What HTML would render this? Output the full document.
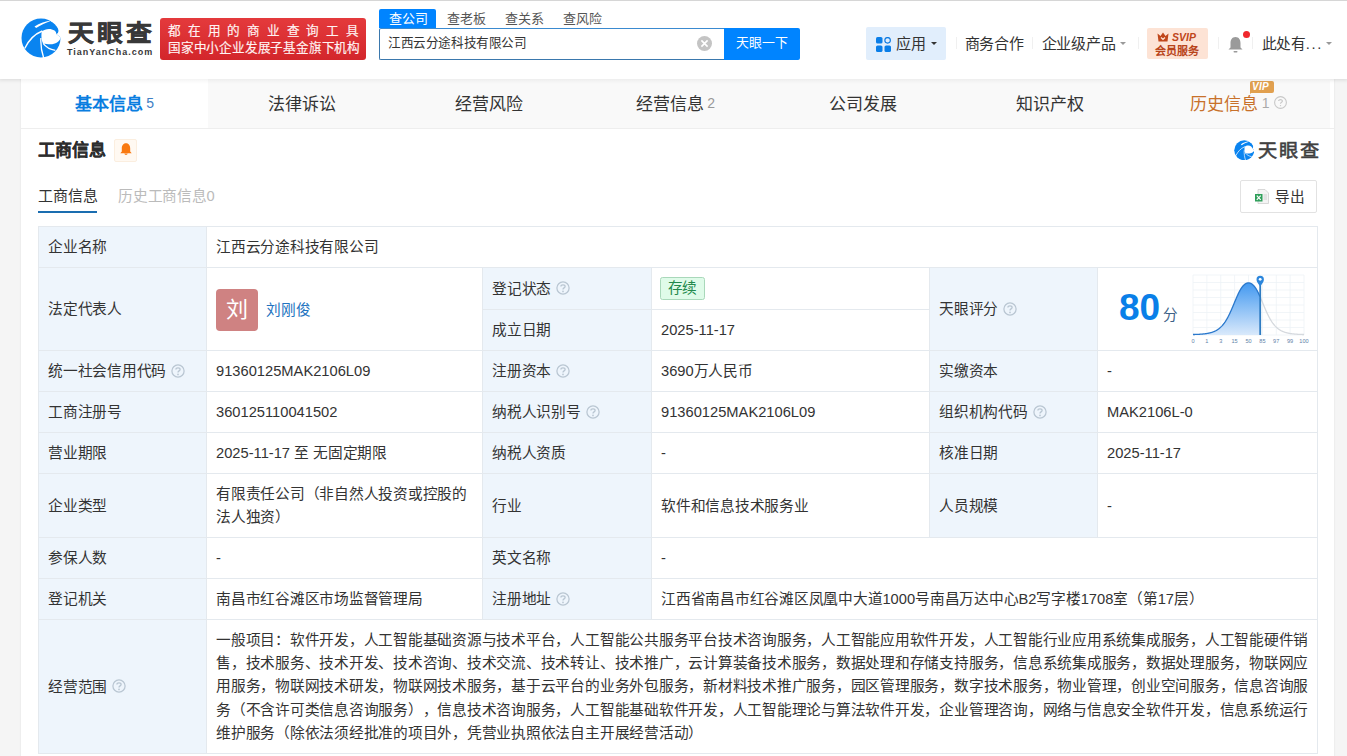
<!DOCTYPE html>
<html lang="zh-CN"><head><meta charset="utf-8"><title>天眼查</title>
<style>
html,body{margin:0;padding:0;}
svg{display:block}
*{text-spacing-trim:space-all}
body{width:1347px;height:756px;overflow:hidden;position:relative;background:#f5f5f5;font-family:"Liberation Sans", sans-serif;}
</style></head><body>
<div style="position:absolute;left:0px;top:0px;width:1347px;height:79px;background:#fff;box-shadow:0 1px 3px rgba(0,0,0,0.06);z-index:2"></div>
<div style="position:absolute;left:0px;top:0px;width:1347px;height:1px;background:#d6d6d6;z-index:3"></div>
<div style="position:absolute;left:0px;top:79px;width:1347px;height:5px;background:linear-gradient(180deg,rgba(0,0,0,0.045),rgba(0,0,0,0));z-index:7"></div>
<div style="position:absolute;left:21.2px;top:17.5px;width:40px;height:40px;z-index:4"><svg width="40" height="40" viewBox="1.5 1 40 40">
<circle cx="21.5" cy="21" r="19.5" fill="#0a84f0"/>
<path d="M15.0 9.4 C20 6.2 26 4.2 32.2 3.6 C26.5 5.9 21 8.3 16.6 11.0 Z" fill="#fff"/>
<path d="M31.6 4.6 C35.2 5.8 38.3 8.8 38.9 12.6 C39.2 15.1 38.3 16.9 36.8 16.9 L41.3 20.4 L43 20.4 L43 -1 L31 -1 Z" fill="#fff"/>
<path d="M22.3 14.3 C25.5 11.6 31.5 10.9 35 13.6 C36.2 14.6 36.8 15.8 36.8 16.9 L41.3 20.4 C40.2 24.6 35.8 27.2 31 27.2 C28.2 27.2 25.5 26.8 23.9 26.7 C22 24.5 21.5 18.5 22.3 14.3 Z" fill="#fff"/>
<path d="M5.2 31.5 C8.5 24.5 14 17.5 22.8 14" stroke="#fff" stroke-width="1.4" fill="none"/>
<path d="M21.4 21 C21 28 22 34.5 24.2 41" stroke="#fff" stroke-width="1.3" fill="none"/>
<path d="M23.6 26.4 C26.5 30.2 31 32.6 35.8 33.4" stroke="#fff" stroke-width="1.3" fill="none"/>
</svg></div>
<div style="position:absolute;left:68px;top:18px;font-size:23px;line-height:30px;color:#383838;white-space:nowrap;font-weight:bold;letter-spacing:3px;transform:scaleX(1.12);transform-origin:0 0;-webkit-text-stroke:0.5px #383838;z-index:4">天眼查</div>
<div style="position:absolute;left:67px;top:46px;font-size:9px;line-height:12px;color:#383838;white-space:nowrap;font-weight:bold;letter-spacing:1px;z-index:4">TianYanCha.com</div>
<div style="position:absolute;left:160px;top:18px;width:206px;height:42px;background:linear-gradient(180deg,#e43a3c,#d3262b);border-radius:3px;z-index:4"></div>
<div style="position:absolute;left:168px;top:22.5px;font-size:12.6px;line-height:16px;color:#fff3f3;white-space:nowrap;letter-spacing:6.75px;-webkit-text-stroke:0.15px #fff3f3;z-index:5">都在用的商业查询工具</div>
<div style="position:absolute;left:168px;top:39.5px;font-size:12.6px;line-height:16px;color:#fff3f3;white-space:nowrap;letter-spacing:-0.2px;-webkit-text-stroke:0.15px #fff3f3;z-index:5">国家中小企业发展子基金旗下机构</div>
<div style="position:absolute;left:379px;top:9px;width:57px;height:19px;background:#0084ff;border-radius:2px 2px 0 0;z-index:4"></div>
<div style="position:absolute;left:388.5px;top:9px;font-size:13px;line-height:19px;color:#fff;white-space:nowrap;z-index:5">查公司</div>
<div style="position:absolute;left:446.5px;top:9px;font-size:13px;line-height:19px;color:#555;white-space:nowrap;z-index:5">查老板</div>
<div style="position:absolute;left:504.6px;top:9px;font-size:13px;line-height:19px;color:#555;white-space:nowrap;z-index:5">查关系</div>
<div style="position:absolute;left:562.7px;top:9px;font-size:13px;line-height:19px;color:#555;white-space:nowrap;z-index:5">查风险</div>
<div style="position:absolute;left:379px;top:28px;width:345px;height:32px;box-sizing:border-box;border:1px solid #3a78ad;border-top-color:#3a8ad0;border-right:none;border-radius:2px 0 0 2px;background:#fff;z-index:4"></div>
<div style="position:absolute;left:388px;top:33px;font-size:12.6px;line-height:20px;color:#333;white-space:nowrap;z-index:5"><span><span style="letter-spacing:-0.4px">江西云分途科技有限公司</span></span></div>
<div style="position:absolute;left:697px;top:36px;width:15px;height:15px;z-index:5"><svg width="15" height="15" viewBox="0 0 15 15"><circle cx="7.5" cy="7.5" r="7.5" fill="#c4c4c4"/><path d="M4.4 4.4 L10.6 10.6 M10.6 4.4 L4.4 10.6" stroke="#fff" stroke-width="1.6"/></svg></div>
<div style="position:absolute;left:724px;top:28px;width:76px;height:32px;background:#0084ff;border-radius:0 2px 2px 0;z-index:4"></div>
<div style="position:absolute;left:736px;top:33px;font-size:12.9px;line-height:20px;color:#fff;white-space:nowrap;z-index:5"><span><span style="letter-spacing:-0.1px">天眼一下</span></span></div>
<div style="position:absolute;left:866px;top:27px;width:80px;height:33px;background:#e1eefc;border-radius:2px;z-index:4"></div>
<div style="position:absolute;left:876px;top:37px;width:15px;height:15px;z-index:5"><svg width="15" height="15" viewBox="0 0 15 15"><rect x="0" y="0" width="6.5" height="6.5" rx="1.6" fill="#0a7ee8"/><circle cx="11.6" cy="3.3" r="2.75" fill="none" stroke="#0a78e0" stroke-width="1.15"/><rect x="0" y="8.5" width="6.5" height="6.5" rx="1.6" fill="#0a7ee8"/><rect x="8.5" y="8.5" width="6.5" height="6.5" rx="1.6" fill="#0a7ee8"/></svg></div>
<div style="position:absolute;left:896px;top:34px;font-size:15px;line-height:20px;color:#333;white-space:nowrap;letter-spacing:-0.1px;z-index:5">应用</div>
<div style="position:absolute;left:930.5px;top:41.5px;width:0;height:0;border-left:3.5px solid transparent;border-right:3.5px solid transparent;border-top:3.5px solid #333;z-index:5"></div>
<div style="position:absolute;left:956px;top:37px;width:1px;height:12px;background:#f0f0f0;z-index:5"></div>
<div style="position:absolute;left:1032px;top:37px;width:1px;height:12px;background:#f0f0f0;z-index:5"></div>
<div style="position:absolute;left:1138px;top:37px;width:1px;height:12px;background:#f0f0f0;z-index:5"></div>
<div style="position:absolute;left:1218px;top:37px;width:1px;height:12px;background:#f0f0f0;z-index:5"></div>
<div style="position:absolute;left:1252px;top:37px;width:1px;height:12px;background:#f0f0f0;z-index:5"></div>
<div style="position:absolute;left:964.5px;top:34px;font-size:15px;line-height:20px;color:#333;white-space:nowrap;letter-spacing:-0.1px;z-index:5">商务合作</div>
<div style="position:absolute;left:1041.5px;top:34px;font-size:15px;line-height:20px;color:#333;white-space:nowrap;letter-spacing:-0.25px;z-index:5">企业级产品</div>
<div style="position:absolute;left:1120px;top:41.5px;width:0;height:0;border-left:3.5px solid transparent;border-right:3.5px solid transparent;border-top:3.5px solid #999;z-index:5"></div>
<div style="position:absolute;left:1147px;top:28px;width:61px;height:31px;background:#fde3d5;border-radius:2px;z-index:4"></div>
<div style="position:absolute;left:1157px;top:32px;width:12px;height:10px;z-index:5"><svg width="12" height="10" viewBox="0 0 12 10"><path d="M0.5 1.5 L3.5 4 L6 0.5 L8.5 4 L11.5 1.5 L10.5 9.5 L1.5 9.5 Z" fill="#c0461a"/><path d="M4 5.5 L6 7.5 L8 5.5" stroke="#fde3d5" stroke-width="1.2" fill="none"/></svg></div>
<div style="position:absolute;left:1172px;top:30px;font-size:10.5px;line-height:14px;color:#c0461a;white-space:nowrap;font-weight:bold;font-style:italic;z-index:5"><span>SVIP</span></div>
<div style="position:absolute;left:1155px;top:44px;font-size:11px;line-height:14px;color:#b8441a;white-space:nowrap;font-weight:bold;z-index:5">会员服务</div>
<div style="position:absolute;left:1227.5px;top:36px;width:15px;height:17px;z-index:5"><svg width="15" height="17" viewBox="0 0 15 17"><path d="M7.5 1 C4 1 2.5 4 2.5 7 L2.5 11.5 L0.5 13.5 L14.5 13.5 L12.5 11.5 L12.5 7 C12.5 4 11 1 7.5 1Z" fill="#9a9a9a"/><rect x="5.5" y="15" width="4" height="1.5" rx="0.7" fill="#9a9a9a"/></svg></div>
<div style="position:absolute;left:1243px;top:31.2px;width:7px;height:7px;background:#f0282d;border-radius:50%;z-index:6"></div>
<div style="position:absolute;left:1261.5px;top:34px;font-size:14.7px;line-height:20px;color:#333;white-space:nowrap;z-index:5"><span><span style="letter-spacing:-0.24px">此处有</span></span><span style="letter-spacing:1.6px"><span>...</span></span></div>
<div style="position:absolute;left:1325.5px;top:41.5px;width:0;height:0;border-left:3.5px solid transparent;border-right:3.5px solid transparent;border-top:3.5px solid #999;z-index:5"></div>
<div style="position:absolute;left:21px;top:79px;width:1313px;height:700px;background:#fff;box-shadow:0 0 2px rgba(0,0,0,0.09);z-index:1"></div>
<div style="position:absolute;left:21px;top:79px;width:187px;height:49px;background:#fff;z-index:2"></div>
<div style="position:absolute;left:21px;top:79px;width:187px;height:47px;display:flex;align-items:center;justify-content:center;font-size:17px;white-space:nowrap;z-index:3"><span style="font-weight:bold;color:#0a7ee0">基本信息</span><span style="font-size:14px;color:#3f7fc4;margin-left:3.5px">5</span></div>
<div style="position:absolute;left:208px;top:79px;width:187px;height:49px;background:#f9f9f9;z-index:2"></div>
<div style="position:absolute;left:208px;top:79px;width:187px;height:47px;display:flex;align-items:center;justify-content:center;font-size:17px;white-space:nowrap;z-index:3"><span style="color:#333">法律诉讼</span></div>
<div style="position:absolute;left:395px;top:79px;width:187px;height:49px;background:#f9f9f9;z-index:2"></div>
<div style="position:absolute;left:395px;top:79px;width:187px;height:47px;display:flex;align-items:center;justify-content:center;font-size:17px;white-space:nowrap;z-index:3"><span style="color:#333">经营风险</span></div>
<div style="position:absolute;left:582px;top:79px;width:187px;height:49px;background:#f9f9f9;z-index:2"></div>
<div style="position:absolute;left:582px;top:79px;width:187px;height:47px;display:flex;align-items:center;justify-content:center;font-size:17px;white-space:nowrap;z-index:3"><span style="color:#333">经营信息</span><span style="font-size:14px;color:#999;margin-left:3.5px">2</span></div>
<div style="position:absolute;left:769px;top:79px;width:187px;height:49px;background:#f9f9f9;z-index:2"></div>
<div style="position:absolute;left:769px;top:79px;width:187px;height:47px;display:flex;align-items:center;justify-content:center;font-size:17px;white-space:nowrap;z-index:3"><span style="color:#333">公司发展</span></div>
<div style="position:absolute;left:956px;top:79px;width:187px;height:49px;background:#f9f9f9;z-index:2"></div>
<div style="position:absolute;left:956px;top:79px;width:187px;height:47px;display:flex;align-items:center;justify-content:center;font-size:17px;white-space:nowrap;z-index:3"><span style="color:#333">知识产权</span></div>
<div style="position:absolute;left:1143px;top:79px;width:187px;height:49px;background:#f9f9f9;z-index:2"></div>
<div style="position:absolute;left:1143px;top:79px;width:187px;height:47px;display:flex;align-items:center;justify-content:center;font-size:17px;white-space:nowrap;z-index:3"><span style="color:#c8712a">历史信息</span><span style="font-size:14px;color:#aaa;margin-left:3.5px">1</span><span style="display:inline-block;width:13px;"></span></div>
<div style="position:absolute;left:21px;top:128px;width:1313px;height:1px;background:#eeeeee;z-index:3"></div>
<div style="position:absolute;left:1249.5px;top:81px;width:24.5px;height:11.5px;background:#e1a04f;border-radius:2px;z-index:4"></div>
<div style="position:absolute;left:1249.5px;top:91px;width:0;height:0;border-top:3px solid #e1a04f;border-right:4px solid transparent;z-index:4"></div>
<div style="position:absolute;left:1252px;top:80px;font-size:10px;line-height:13px;color:#fff;white-space:nowrap;font-weight:bold;font-style:italic;letter-spacing:0.3px;z-index:5">VIP</div>
<div style="position:absolute;left:1274px;top:95.5px;width:13px;height:13px;z-index:5"><svg width="13" height="13" viewBox="0 0 13 13"><circle cx="6.5" cy="6.5" r="5.9" fill="none" stroke="#c8c8c8" stroke-width="1.1"/><path d="M4.6 5 C4.6 3.2 8.4 3.2 8.4 5 C8.4 6.3 6.5 6.3 6.5 7.8" fill="none" stroke="#c8c8c8" stroke-width="1.1"/><circle cx="6.5" cy="9.6" r="0.7" fill="#c8c8c8"/></svg></div>
<div style="position:absolute;left:38px;top:136.5px;font-size:17px;line-height:28px;color:#2d2d2d;white-space:nowrap;font-weight:bold;-webkit-text-stroke:0.12px #2d2d2d;z-index:3">工商信息</div>
<div style="position:absolute;left:114px;top:139px;width:22.5px;height:23px;box-sizing:border-box;background:#fff9f2;border:1px solid #fbeedf;border-radius:2px;z-index:3"></div>
<div style="position:absolute;left:119.5px;top:142.5px;width:12px;height:13px;z-index:4"><svg width="12" height="13" viewBox="0 0 12 13"><path d="M6 0.3 C3 0.3 1.8 3 1.8 5.5 L1.8 8.6 L0.3 10.2 L11.7 10.2 L10.2 8.6 L10.2 5.5 C10.2 3 9 0.3 6 0.3Z" fill="#f97a12"/><path d="M4.3 10.5 L7.7 10.5 C7.5 12.4 4.5 12.4 4.3 10.5Z" fill="#f97a12"/></svg></div>
<div style="position:absolute;left:1233.5px;top:139.5px;width:21px;height:21px;z-index:4"><svg width="20.5" height="20.5" viewBox="1.5 1 40 40">
<circle cx="21.5" cy="21" r="19.5" fill="#0a84f0"/>
<path d="M15.0 9.4 C20 6.2 26 4.2 32.2 3.6 C26.5 5.9 21 8.3 16.6 11.0 Z" fill="#fff"/>
<path d="M31.6 4.6 C35.2 5.8 38.3 8.8 38.9 12.6 C39.2 15.1 38.3 16.9 36.8 16.9 L41.3 20.4 L43 20.4 L43 -1 L31 -1 Z" fill="#fff"/>
<path d="M22.3 14.3 C25.5 11.6 31.5 10.9 35 13.6 C36.2 14.6 36.8 15.8 36.8 16.9 L41.3 20.4 C40.2 24.6 35.8 27.2 31 27.2 C28.2 27.2 25.5 26.8 23.9 26.7 C22 24.5 21.5 18.5 22.3 14.3 Z" fill="#fff"/>
<path d="M5.2 31.5 C8.5 24.5 14 17.5 22.8 14" stroke="#fff" stroke-width="1.4" fill="none"/>
<path d="M21.4 21 C21 28 22 34.5 24.2 41" stroke="#fff" stroke-width="1.3" fill="none"/>
<path d="M23.6 26.4 C26.5 30.2 31 32.6 35.8 33.4" stroke="#fff" stroke-width="1.3" fill="none"/>
</svg></div>
<div style="position:absolute;left:1258px;top:136.5px;font-size:18px;line-height:28px;color:#404040;white-space:nowrap;font-weight:normal;-webkit-text-stroke:0.55px #404040;letter-spacing:1.5px;transform:scaleX(1.07);transform-origin:0 0;z-index:4">天眼查</div>
<div style="position:absolute;left:38px;top:184.5px;font-size:15px;line-height:21px;color:#333;white-space:nowrap;z-index:3">工商信息</div>
<div style="position:absolute;left:38px;top:211px;width:59px;height:2px;background:#1a6db0;z-index:3"></div>
<div style="position:absolute;left:118px;top:185.5px;font-size:14.7px;line-height:21px;color:#bbb;white-space:nowrap;z-index:3"><span><span style="letter-spacing:-0.24px">历史工商信息</span>0</span></div>
<div style="position:absolute;left:1240px;top:180px;width:77px;height:32.5px;box-sizing:border-box;border:1px solid #e2e2e2;border-radius:2px;background:#fff;z-index:3"></div>
<div style="position:absolute;left:1255px;top:189px;width:14px;height:15px;z-index:4"><svg width="14" height="15" viewBox="0 0 14 15"><path d="M3 0.5 L10 0.5 L13.5 4 L13.5 14.5 L3 14.5 Z" fill="#f4f4f4" stroke="#cfcfcf" stroke-width="0.8"/><path d="M8.5 6 L12 6 M8.5 8 L12 8 M8.5 10 L12 10" stroke="#c8c8c8" stroke-width="0.8"/><rect x="0" y="5" width="7.5" height="7.5" fill="#2f9f5a"/><path d="M1.8 6.6 L5.7 10.9 M5.7 6.6 L1.8 10.9" stroke="#fff" stroke-width="1.2"/></svg></div>
<div style="position:absolute;left:1275px;top:187px;font-size:14.7px;line-height:21px;color:#333;white-space:nowrap;z-index:4"><span><span style="letter-spacing:-0.24px">导出</span></span></div>
<div style="position:absolute;left:38px;top:226px;width:168px;height:527px;background:#eef5fc;z-index:2"></div>
<div style="position:absolute;left:482px;top:267px;width:169px;height:352px;background:#eef5fc;z-index:2"></div>
<div style="position:absolute;left:929px;top:267px;width:168px;height:270px;background:#eef5fc;z-index:2"></div>
<div style="position:absolute;left:38px;top:226px;width:1280px;height:1px;background:#e4e9ee;z-index:3"></div>
<div style="position:absolute;left:38px;top:267px;width:1280px;height:1px;background:#e4e9ee;z-index:3"></div>
<div style="position:absolute;left:38px;top:350px;width:1280px;height:1px;background:#e4e9ee;z-index:3"></div>
<div style="position:absolute;left:38px;top:391px;width:1280px;height:1px;background:#e4e9ee;z-index:3"></div>
<div style="position:absolute;left:38px;top:432px;width:1280px;height:1px;background:#e4e9ee;z-index:3"></div>
<div style="position:absolute;left:38px;top:473px;width:1280px;height:1px;background:#e4e9ee;z-index:3"></div>
<div style="position:absolute;left:38px;top:537px;width:1280px;height:1px;background:#e4e9ee;z-index:3"></div>
<div style="position:absolute;left:38px;top:578px;width:1280px;height:1px;background:#e4e9ee;z-index:3"></div>
<div style="position:absolute;left:38px;top:619px;width:1280px;height:1px;background:#e4e9ee;z-index:3"></div>
<div style="position:absolute;left:38px;top:753px;width:1280px;height:1px;background:#e4e9ee;z-index:3"></div>
<div style="position:absolute;left:482px;top:309px;width:447px;height:1px;background:#e4e9ee;z-index:3"></div>
<div style="position:absolute;left:38px;top:226px;width:1px;height:527px;background:#e4e9ee;z-index:3"></div>
<div style="position:absolute;left:1317px;top:226px;width:1px;height:528px;background:#e4e9ee;z-index:3"></div>
<div style="position:absolute;left:206px;top:226px;width:1px;height:527px;background:#e4e9ee;z-index:3"></div>
<div style="position:absolute;left:482px;top:267px;width:1px;height:352px;background:#e4e9ee;z-index:3"></div>
<div style="position:absolute;left:651px;top:267px;width:1px;height:352px;background:#e4e9ee;z-index:3"></div>
<div style="position:absolute;left:929px;top:267px;width:1px;height:270px;background:#e4e9ee;z-index:3"></div>
<div style="position:absolute;left:1097px;top:267px;width:1px;height:270px;background:#e4e9ee;z-index:3"></div>
<div style="position:absolute;left:48px;top:226px;width:148px;height:41px;display:flex;align-items:center;box-sizing:border-box;padding-top:2px;font-size:14.7px;line-height:21px;color:#333;z-index:4;"><span><span style="letter-spacing:-0.24px">企业名称</span></span></div>
<div style="position:absolute;left:216px;top:226px;width:1091px;height:41px;display:flex;align-items:center;box-sizing:border-box;padding-top:2px;font-size:14.7px;line-height:21px;color:#333;z-index:4;"><span><span style="letter-spacing:-0.24px">江西云分途科技有限公司</span></span></div>
<div style="position:absolute;left:48px;top:267px;width:148px;height:83px;display:flex;align-items:center;box-sizing:border-box;padding-top:2px;font-size:14.7px;line-height:21px;color:#333;z-index:4;"><span><span style="letter-spacing:-0.24px">法定代表人</span></span></div>
<div style="position:absolute;left:216px;top:267px;width:256px;height:83px;display:flex;align-items:center;box-sizing:border-box;padding-top:2px;font-size:14.7px;line-height:21px;color:#333;z-index:4;"><div style="width:42px;height:42px;border-radius:4px;background:#cf8282;color:#fff;font-size:22px;line-height:42px;text-align:center;flex:none"><span><span style="letter-spacing:-0.24px">刘</span></span></div><span style="color:#2273c0;margin-left:8px;position:relative;top:1px"><span><span style="letter-spacing:-0.24px">刘刚俊</span></span></span></div>
<div style="position:absolute;left:492px;top:267px;width:149px;height:42px;display:flex;align-items:center;box-sizing:border-box;padding-top:2px;font-size:14.7px;line-height:21px;color:#333;z-index:4;"><span><span style="letter-spacing:-0.24px">登记状态</span></span><svg style="margin-left:5.4px;flex:none;position:relative;top:-0.8px" width="14" height="14" viewBox="0 0 14 14"><circle cx="7" cy="7" r="6.1" fill="none" stroke="#b9c6d2" stroke-width="1.25"/><path d="M4.9 5.4 C4.9 3.3 9.1 3.3 9.1 5.4 C9.1 6.9 7 6.9 7 8.5" fill="none" stroke="#b9c6d2" stroke-width="1.3"/><circle cx="7" cy="10.4" r="0.85" fill="#b9c6d2"/></svg></div>
<div style="position:absolute;left:661px;top:267px;height:42px;display:flex;align-items:center;z-index:4"><span style="display:inline-block;box-sizing:border-box;height:23px;line-height:21px;padding:0 6.5px;margin-left:-1px;margin-top:0px;border:1px solid #a9d8ba;background:#dffbe9;color:#23894c;border-radius:2.5px;font-size:14.7px;letter-spacing:-0.24px">存续</span></div>
<div style="position:absolute;left:492px;top:309px;width:149px;height:41px;display:flex;align-items:center;box-sizing:border-box;padding-top:2px;font-size:14.7px;line-height:21px;color:#333;z-index:4;"><span><span style="letter-spacing:-0.24px">成立日期</span></span></div>
<div style="position:absolute;left:661px;top:309px;width:258px;height:41px;display:flex;align-items:center;box-sizing:border-box;padding-top:2px;font-size:14.7px;line-height:21px;color:#333;z-index:4;"><span>2025-11-17</span></div>
<div style="position:absolute;left:939px;top:267px;width:148px;height:83px;display:flex;align-items:center;box-sizing:border-box;padding-top:2px;font-size:14.7px;line-height:21px;color:#333;z-index:4;"><span><span style="letter-spacing:-0.24px">天眼评分</span></span><svg style="margin-left:5.4px;flex:none;position:relative;top:-0.8px" width="14" height="14" viewBox="0 0 14 14"><circle cx="7" cy="7" r="6.1" fill="none" stroke="#b9c6d2" stroke-width="1.25"/><path d="M4.9 5.4 C4.9 3.3 9.1 3.3 9.1 5.4 C9.1 6.9 7 6.9 7 8.5" fill="none" stroke="#b9c6d2" stroke-width="1.3"/><circle cx="7" cy="10.4" r="0.85" fill="#b9c6d2"/></svg></div>
<div style="position:absolute;left:1119px;top:285px;font-size:37px;line-height:46px;color:#0a7fe8;white-space:nowrap;font-weight:bold;z-index:4">80</div>
<div style="position:absolute;left:1162.5px;top:302.5px;font-size:14.7px;line-height:24px;color:#3e6288;white-space:nowrap;z-index:4"><span><span style="letter-spacing:-0.24px">分</span></span></div>
<div style="position:absolute;left:1193px;top:275px;width:111px;height:60px;z-index:4"><svg width="111" height="60" viewBox="0 0 111 60" style="overflow:visible"><defs><linearGradient id="g1" x1="0" y1="0" x2="0" y2="1"><stop offset="0" stop-color="#4399f0"/><stop offset="1" stop-color="#d9e9fb"/></linearGradient></defs>
<line x1="0.0" y1="0" x2="0.0" y2="60" stroke="#eef2f6" stroke-width="0.8"/><line x1="0" y1="0.0" x2="111" y2="0.0" stroke="#eef2f6" stroke-width="0.8"/><line x1="13.88" y1="0" x2="13.88" y2="60" stroke="#eef2f6" stroke-width="0.8"/><line x1="0" y1="7.5" x2="111" y2="7.5" stroke="#eef2f6" stroke-width="0.8"/><line x1="27.75" y1="0" x2="27.75" y2="60" stroke="#eef2f6" stroke-width="0.8"/><line x1="0" y1="15.0" x2="111" y2="15.0" stroke="#eef2f6" stroke-width="0.8"/><line x1="41.62" y1="0" x2="41.62" y2="60" stroke="#eef2f6" stroke-width="0.8"/><line x1="0" y1="22.5" x2="111" y2="22.5" stroke="#eef2f6" stroke-width="0.8"/><line x1="55.5" y1="0" x2="55.5" y2="60" stroke="#eef2f6" stroke-width="0.8"/><line x1="0" y1="30.0" x2="111" y2="30.0" stroke="#eef2f6" stroke-width="0.8"/><line x1="69.38" y1="0" x2="69.38" y2="60" stroke="#eef2f6" stroke-width="0.8"/><line x1="0" y1="37.5" x2="111" y2="37.5" stroke="#eef2f6" stroke-width="0.8"/><line x1="83.25" y1="0" x2="83.25" y2="60" stroke="#eef2f6" stroke-width="0.8"/><line x1="0" y1="45.0" x2="111" y2="45.0" stroke="#eef2f6" stroke-width="0.8"/><line x1="97.12" y1="0" x2="97.12" y2="60" stroke="#eef2f6" stroke-width="0.8"/><line x1="0" y1="52.5" x2="111" y2="52.5" stroke="#eef2f6" stroke-width="0.8"/><line x1="111.0" y1="0" x2="111.0" y2="60" stroke="#eef2f6" stroke-width="0.8"/><line x1="0" y1="60.0" x2="111" y2="60.0" stroke="#eef2f6" stroke-width="0.8"/>
<path d="M0.00 59.52 L0.25 59.52 L0.50 59.51 L0.75 59.50 L1.00 59.50 L1.25 59.49 L1.50 59.48 L1.75 59.48 L2.00 59.47 L2.25 59.46 L2.50 59.45 L2.75 59.44 L3.00 59.43 L3.25 59.42 L3.50 59.41 L3.75 59.40 L4.00 59.39 L4.25 59.38 L4.50 59.37 L4.75 59.36 L5.00 59.35 L5.25 59.34 L5.50 59.32 L5.75 59.31 L6.00 59.30 L6.25 59.28 L6.50 59.27 L6.75 59.25 L7.00 59.24 L7.25 59.22 L7.50 59.20 L7.75 59.19 L8.00 59.17 L8.25 59.15 L8.50 59.13 L8.75 59.11 L9.00 59.09 L9.25 59.07 L9.50 59.04 L9.75 59.02 L10.00 59.00 L10.25 58.97 L10.50 58.95 L10.75 58.92 L11.00 58.89 L11.25 58.87 L11.50 58.84 L11.75 58.81 L12.00 58.78 L12.25 58.74 L12.50 58.71 L12.75 58.68 L13.00 58.64 L13.25 58.60 L13.50 58.56 L13.75 58.53 L14.00 58.48 L14.25 58.44 L14.50 58.40 L14.75 58.35 L15.00 58.31 L15.25 58.26 L15.50 58.21 L15.75 58.16 L16.00 58.10 L16.25 58.05 L16.50 57.99 L16.75 57.93 L17.00 57.87 L17.25 57.81 L17.50 57.74 L17.75 57.67 L18.00 57.60 L18.25 57.53 L18.50 57.46 L18.75 57.38 L19.00 57.30 L19.25 57.22 L19.50 57.13 L19.75 57.05 L20.00 56.96 L20.25 56.86 L20.50 56.76 L20.75 56.66 L21.00 56.56 L21.25 56.46 L21.50 56.35 L21.75 56.23 L22.00 56.11 L22.25 55.99 L22.50 55.87 L22.75 55.74 L23.00 55.61 L23.25 55.47 L23.50 55.33 L23.75 55.18 L24.00 55.03 L24.25 54.88 L24.50 54.72 L24.75 54.55 L25.00 54.38 L25.25 54.21 L25.50 54.03 L25.75 53.84 L26.00 53.65 L26.25 53.45 L26.50 53.25 L26.75 53.04 L27.00 52.82 L27.25 52.60 L27.50 52.37 L27.75 52.14 L28.00 51.90 L28.25 51.65 L28.50 51.40 L28.75 51.13 L29.00 50.86 L29.25 50.59 L29.50 50.30 L29.75 50.01 L30.00 49.71 L30.25 49.40 L30.50 49.09 L30.75 48.77 L31.00 48.43 L31.25 48.10 L31.50 47.75 L31.75 47.39 L32.00 47.03 L32.25 46.65 L32.50 46.27 L32.75 45.88 L33.00 45.48 L33.25 45.07 L33.50 44.66 L33.75 44.23 L34.00 43.80 L34.25 43.35 L34.50 42.90 L34.75 42.44 L35.00 41.97 L35.25 41.50 L35.50 41.01 L35.75 40.52 L36.00 40.01 L36.25 39.50 L36.50 38.99 L36.75 38.46 L37.00 37.93 L37.25 37.39 L37.50 36.84 L37.75 36.29 L38.00 35.73 L38.25 35.17 L38.50 34.59 L38.75 34.02 L39.00 33.44 L39.25 32.85 L39.50 32.26 L39.75 31.67 L40.00 31.08 L40.25 30.48 L40.50 29.88 L40.75 29.28 L41.00 28.67 L41.25 28.07 L41.50 27.47 L41.75 26.86 L42.00 26.26 L42.25 25.66 L42.50 25.06 L42.75 24.47 L43.00 23.88 L43.25 23.29 L43.50 22.71 L43.75 22.14 L44.00 21.57 L44.25 21.00 L44.50 20.45 L44.75 19.90 L45.00 19.36 L45.25 18.83 L45.50 18.31 L45.75 17.80 L46.00 17.30 L46.25 16.81 L46.50 16.33 L46.75 15.86 L47.00 15.40 L47.25 14.96 L47.50 14.53 L47.75 14.11 L48.00 13.71 L48.25 13.32 L48.50 12.94 L48.75 12.58 L49.00 12.23 L49.25 11.89 L49.50 11.57 L49.75 11.26 L50.00 10.97 L50.25 10.69 L50.50 10.42 L50.75 10.17 L51.00 9.93 L51.25 9.71 L51.50 9.50 L51.75 9.30 L52.00 9.12 L52.25 8.95 L52.50 8.79 L52.75 8.65 L53.00 8.51 L53.25 8.40 L53.50 8.29 L53.75 8.20 L54.00 8.12 L54.25 8.05 L54.50 8.00 L54.75 7.95 L55.00 7.92 L55.25 7.91 L55.50 7.90 L55.75 7.91 L56.00 7.92 L56.25 7.95 L56.50 8.00 L56.75 8.05 L57.00 8.12 L57.25 8.20 L57.50 8.29 L57.75 8.40 L58.00 8.51 L58.25 8.65 L58.50 8.79 L58.75 8.95 L59.00 9.12 L59.25 9.30 L59.50 9.50 L59.75 9.71 L60.00 9.93 L60.25 10.17 L60.50 10.42 L60.75 10.69 L61.00 10.97 L61.25 11.26 L61.50 11.57 L61.75 11.89 L62.00 12.23 L62.25 12.58 L62.50 12.94 L62.75 13.32 L63.00 13.71 L63.25 14.11 L63.50 14.53 L63.75 14.96 L64.00 15.40 L64.25 15.86 L64.50 16.33 L64.75 16.81 L65.00 17.30 L65.25 17.80 L65.50 18.31 L65.75 18.83 L66.00 19.36 L66.25 19.90 L66.50 20.45 L66.75 21.00 L67.00 21.57 L67.2 22.02 L67.2 60 L0 60 Z" fill="url(#g1)"/>
<path d="M0.00 59.52 L0.25 59.52 L0.50 59.51 L0.75 59.50 L1.00 59.50 L1.25 59.49 L1.50 59.48 L1.75 59.48 L2.00 59.47 L2.25 59.46 L2.50 59.45 L2.75 59.44 L3.00 59.43 L3.25 59.42 L3.50 59.41 L3.75 59.40 L4.00 59.39 L4.25 59.38 L4.50 59.37 L4.75 59.36 L5.00 59.35 L5.25 59.34 L5.50 59.32 L5.75 59.31 L6.00 59.30 L6.25 59.28 L6.50 59.27 L6.75 59.25 L7.00 59.24 L7.25 59.22 L7.50 59.20 L7.75 59.19 L8.00 59.17 L8.25 59.15 L8.50 59.13 L8.75 59.11 L9.00 59.09 L9.25 59.07 L9.50 59.04 L9.75 59.02 L10.00 59.00 L10.25 58.97 L10.50 58.95 L10.75 58.92 L11.00 58.89 L11.25 58.87 L11.50 58.84 L11.75 58.81 L12.00 58.78 L12.25 58.74 L12.50 58.71 L12.75 58.68 L13.00 58.64 L13.25 58.60 L13.50 58.56 L13.75 58.53 L14.00 58.48 L14.25 58.44 L14.50 58.40 L14.75 58.35 L15.00 58.31 L15.25 58.26 L15.50 58.21 L15.75 58.16 L16.00 58.10 L16.25 58.05 L16.50 57.99 L16.75 57.93 L17.00 57.87 L17.25 57.81 L17.50 57.74 L17.75 57.67 L18.00 57.60 L18.25 57.53 L18.50 57.46 L18.75 57.38 L19.00 57.30 L19.25 57.22 L19.50 57.13 L19.75 57.05 L20.00 56.96 L20.25 56.86 L20.50 56.76 L20.75 56.66 L21.00 56.56 L21.25 56.46 L21.50 56.35 L21.75 56.23 L22.00 56.11 L22.25 55.99 L22.50 55.87 L22.75 55.74 L23.00 55.61 L23.25 55.47 L23.50 55.33 L23.75 55.18 L24.00 55.03 L24.25 54.88 L24.50 54.72 L24.75 54.55 L25.00 54.38 L25.25 54.21 L25.50 54.03 L25.75 53.84 L26.00 53.65 L26.25 53.45 L26.50 53.25 L26.75 53.04 L27.00 52.82 L27.25 52.60 L27.50 52.37 L27.75 52.14 L28.00 51.90 L28.25 51.65 L28.50 51.40 L28.75 51.13 L29.00 50.86 L29.25 50.59 L29.50 50.30 L29.75 50.01 L30.00 49.71 L30.25 49.40 L30.50 49.09 L30.75 48.77 L31.00 48.43 L31.25 48.10 L31.50 47.75 L31.75 47.39 L32.00 47.03 L32.25 46.65 L32.50 46.27 L32.75 45.88 L33.00 45.48 L33.25 45.07 L33.50 44.66 L33.75 44.23 L34.00 43.80 L34.25 43.35 L34.50 42.90 L34.75 42.44 L35.00 41.97 L35.25 41.50 L35.50 41.01 L35.75 40.52 L36.00 40.01 L36.25 39.50 L36.50 38.99 L36.75 38.46 L37.00 37.93 L37.25 37.39 L37.50 36.84 L37.75 36.29 L38.00 35.73 L38.25 35.17 L38.50 34.59 L38.75 34.02 L39.00 33.44 L39.25 32.85 L39.50 32.26 L39.75 31.67 L40.00 31.08 L40.25 30.48 L40.50 29.88 L40.75 29.28 L41.00 28.67 L41.25 28.07 L41.50 27.47 L41.75 26.86 L42.00 26.26 L42.25 25.66 L42.50 25.06 L42.75 24.47 L43.00 23.88 L43.25 23.29 L43.50 22.71 L43.75 22.14 L44.00 21.57 L44.25 21.00 L44.50 20.45 L44.75 19.90 L45.00 19.36 L45.25 18.83 L45.50 18.31 L45.75 17.80 L46.00 17.30 L46.25 16.81 L46.50 16.33 L46.75 15.86 L47.00 15.40 L47.25 14.96 L47.50 14.53 L47.75 14.11 L48.00 13.71 L48.25 13.32 L48.50 12.94 L48.75 12.58 L49.00 12.23 L49.25 11.89 L49.50 11.57 L49.75 11.26 L50.00 10.97 L50.25 10.69 L50.50 10.42 L50.75 10.17 L51.00 9.93 L51.25 9.71 L51.50 9.50 L51.75 9.30 L52.00 9.12 L52.25 8.95 L52.50 8.79 L52.75 8.65 L53.00 8.51 L53.25 8.40 L53.50 8.29 L53.75 8.20 L54.00 8.12 L54.25 8.05 L54.50 8.00 L54.75 7.95 L55.00 7.92 L55.25 7.91 L55.50 7.90 L55.75 7.91 L56.00 7.92 L56.25 7.95 L56.50 8.00 L56.75 8.05 L57.00 8.12 L57.25 8.20 L57.50 8.29 L57.75 8.40 L58.00 8.51 L58.25 8.65 L58.50 8.79 L58.75 8.95 L59.00 9.12 L59.25 9.30 L59.50 9.50 L59.75 9.71 L60.00 9.93 L60.25 10.17 L60.50 10.42 L60.75 10.69 L61.00 10.97 L61.25 11.26 L61.50 11.57 L61.75 11.89 L62.00 12.23 L62.25 12.58 L62.50 12.94 L62.75 13.32 L63.00 13.71 L63.25 14.11 L63.50 14.53 L63.75 14.96 L64.00 15.40 L64.25 15.86 L64.50 16.33 L64.75 16.81 L65.00 17.30 L65.25 17.80 L65.50 18.31 L65.75 18.83 L66.00 19.36 L66.25 19.90 L66.50 20.45 L66.75 21.00 L67.00 21.57" fill="none" stroke="#2a78cc" stroke-width="1.3"/>
<path d="M67.25 22.14 L67.50 22.71 L67.75 23.29 L68.00 23.88 L68.25 24.47 L68.50 25.06 L68.75 25.66 L69.00 26.26 L69.25 26.86 L69.50 27.47 L69.75 28.07 L70.00 28.67 L70.25 29.28 L70.50 29.88 L70.75 30.48 L71.00 31.08 L71.25 31.67 L71.50 32.26 L71.75 32.85 L72.00 33.44 L72.25 34.02 L72.50 34.59 L72.75 35.17 L73.00 35.73 L73.25 36.29 L73.50 36.84 L73.75 37.39 L74.00 37.93 L74.25 38.46 L74.50 38.99 L74.75 39.50 L75.00 40.01 L75.25 40.52 L75.50 41.01 L75.75 41.50 L76.00 41.97 L76.25 42.44 L76.50 42.90 L76.75 43.35 L77.00 43.80 L77.25 44.23 L77.50 44.66 L77.75 45.07 L78.00 45.48 L78.25 45.88 L78.50 46.27 L78.75 46.65 L79.00 47.03 L79.25 47.39 L79.50 47.75 L79.75 48.10 L80.00 48.43 L80.25 48.77 L80.50 49.09 L80.75 49.40 L81.00 49.71 L81.25 50.01 L81.50 50.30 L81.75 50.59 L82.00 50.86 L82.25 51.13 L82.50 51.40 L82.75 51.65 L83.00 51.90 L83.25 52.14 L83.50 52.37 L83.75 52.60 L84.00 52.82 L84.25 53.04 L84.50 53.25 L84.75 53.45 L85.00 53.65 L85.25 53.84 L85.50 54.03 L85.75 54.21 L86.00 54.38 L86.25 54.55 L86.50 54.72 L86.75 54.88 L87.00 55.03 L87.25 55.18 L87.50 55.33 L87.75 55.47 L88.00 55.61 L88.25 55.74 L88.50 55.87 L88.75 55.99 L89.00 56.11 L89.25 56.23 L89.50 56.35 L89.75 56.46 L90.00 56.56 L90.25 56.66 L90.50 56.76 L90.75 56.86 L91.00 56.96 L91.25 57.05 L91.50 57.13 L91.75 57.22 L92.00 57.30 L92.25 57.38 L92.50 57.46 L92.75 57.53 L93.00 57.60 L93.25 57.67 L93.50 57.74 L93.75 57.81 L94.00 57.87 L94.25 57.93 L94.50 57.99 L94.75 58.05 L95.00 58.10 L95.25 58.16 L95.50 58.21 L95.75 58.26 L96.00 58.31 L96.25 58.35 L96.50 58.40 L96.75 58.44 L97.00 58.48 L97.25 58.53 L97.50 58.56 L97.75 58.60 L98.00 58.64 L98.25 58.68 L98.50 58.71 L98.75 58.74 L99.00 58.78 L99.25 58.81 L99.50 58.84 L99.75 58.87 L100.00 58.89 L100.25 58.92 L100.50 58.95 L100.75 58.97 L101.00 59.00 L101.25 59.02 L101.50 59.04 L101.75 59.07 L102.00 59.09 L102.25 59.11 L102.50 59.13 L102.75 59.15 L103.00 59.17 L103.25 59.19 L103.50 59.20 L103.75 59.22 L104.00 59.24 L104.25 59.25 L104.50 59.27 L104.75 59.28 L105.00 59.30 L105.25 59.31 L105.50 59.32 L105.75 59.34 L106.00 59.35 L106.25 59.36 L106.50 59.37 L106.75 59.38 L107.00 59.39 L107.25 59.40 L107.50 59.41 L107.75 59.42 L108.00 59.43 L108.25 59.44 L108.50 59.45 L108.75 59.46 L109.00 59.47 L109.25 59.48 L109.50 59.48 L109.75 59.49 L110.00 59.50 L110.25 59.50 L110.50 59.51 L110.75 59.52 L111.00 59.52" fill="none" stroke="#d5d9de" stroke-width="1.3"/>
<line x1="67.2" y1="8" x2="67.2" y2="60" stroke="#2f7cc2" stroke-width="1.8"/>
<path d="M67.2 11.2 C65.2 8.7 63.5 7 63.5 4.5 A3.7 3.7 0 0 1 70.9 4.5 C70.9 7 69.2 8.7 67.2 11.2Z" fill="#2b86dc"/>
<circle cx="67.2" cy="4.3" r="1.4" fill="#fff"/>
</svg></div>
<div style="position:absolute;left:1183.0px;top:337.3px;width:20px;text-align:center;font-size:5.6px;line-height:8px;color:#5f82a8;z-index:4">0</div>
<div style="position:absolute;left:1196.9px;top:337.3px;width:20px;text-align:center;font-size:5.6px;line-height:8px;color:#5f82a8;z-index:4">1</div>
<div style="position:absolute;left:1210.8px;top:337.3px;width:20px;text-align:center;font-size:5.6px;line-height:8px;color:#5f82a8;z-index:4">3</div>
<div style="position:absolute;left:1224.6px;top:337.3px;width:20px;text-align:center;font-size:5.6px;line-height:8px;color:#5f82a8;z-index:4">15</div>
<div style="position:absolute;left:1238.5px;top:337.3px;width:20px;text-align:center;font-size:5.6px;line-height:8px;color:#5f82a8;z-index:4">50</div>
<div style="position:absolute;left:1252.4px;top:337.3px;width:20px;text-align:center;font-size:5.6px;line-height:8px;color:#5f82a8;z-index:4">85</div>
<div style="position:absolute;left:1266.2px;top:337.3px;width:20px;text-align:center;font-size:5.6px;line-height:8px;color:#5f82a8;z-index:4">97</div>
<div style="position:absolute;left:1280.1px;top:337.3px;width:20px;text-align:center;font-size:5.6px;line-height:8px;color:#5f82a8;z-index:4">99</div>
<div style="position:absolute;left:1294.0px;top:337.3px;width:20px;text-align:center;font-size:5.6px;line-height:8px;color:#5f82a8;z-index:4">100</div>
<div style="position:absolute;left:48px;top:350px;width:148px;height:41px;display:flex;align-items:center;box-sizing:border-box;padding-top:2px;font-size:14.7px;line-height:21px;color:#333;z-index:4;"><span><span style="letter-spacing:-0.24px">统一社会信用代码</span></span><svg style="margin-left:5.4px;flex:none;position:relative;top:-0.8px" width="14" height="14" viewBox="0 0 14 14"><circle cx="7" cy="7" r="6.1" fill="none" stroke="#b9c6d2" stroke-width="1.25"/><path d="M4.9 5.4 C4.9 3.3 9.1 3.3 9.1 5.4 C9.1 6.9 7 6.9 7 8.5" fill="none" stroke="#b9c6d2" stroke-width="1.3"/><circle cx="7" cy="10.4" r="0.85" fill="#b9c6d2"/></svg></div>
<div style="position:absolute;left:216px;top:350px;width:256px;height:41px;display:flex;align-items:center;box-sizing:border-box;padding-top:2px;font-size:14.7px;line-height:21px;color:#333;z-index:4;"><span>91360125MAK2106L09</span></div>
<div style="position:absolute;left:492px;top:350px;width:149px;height:41px;display:flex;align-items:center;box-sizing:border-box;padding-top:2px;font-size:14.7px;line-height:21px;color:#333;z-index:4;"><span><span style="letter-spacing:-0.24px">注册资本</span></span><svg style="margin-left:5.4px;flex:none;position:relative;top:-0.8px" width="14" height="14" viewBox="0 0 14 14"><circle cx="7" cy="7" r="6.1" fill="none" stroke="#b9c6d2" stroke-width="1.25"/><path d="M4.9 5.4 C4.9 3.3 9.1 3.3 9.1 5.4 C9.1 6.9 7 6.9 7 8.5" fill="none" stroke="#b9c6d2" stroke-width="1.3"/><circle cx="7" cy="10.4" r="0.85" fill="#b9c6d2"/></svg></div>
<div style="position:absolute;left:661px;top:350px;width:258px;height:41px;display:flex;align-items:center;box-sizing:border-box;padding-top:2px;font-size:14.7px;line-height:21px;color:#333;z-index:4;"><span>3690<span style="letter-spacing:-0.24px">万人民币</span></span></div>
<div style="position:absolute;left:939px;top:350px;width:148px;height:41px;display:flex;align-items:center;box-sizing:border-box;padding-top:2px;font-size:14.7px;line-height:21px;color:#333;z-index:4;"><span><span style="letter-spacing:-0.24px">实缴资本</span></span></div>
<div style="position:absolute;left:1107px;top:350px;width:200px;height:41px;display:flex;align-items:center;box-sizing:border-box;padding-top:2px;font-size:14.7px;line-height:21px;color:#333;z-index:4;"><span>-</span></div>
<div style="position:absolute;left:48px;top:391px;width:148px;height:41px;display:flex;align-items:center;box-sizing:border-box;padding-top:2px;font-size:14.7px;line-height:21px;color:#333;z-index:4;"><span><span style="letter-spacing:-0.24px">工商注册号</span></span></div>
<div style="position:absolute;left:216px;top:391px;width:256px;height:41px;display:flex;align-items:center;box-sizing:border-box;padding-top:2px;font-size:14.7px;line-height:21px;color:#333;z-index:4;"><span>360125110041502</span></div>
<div style="position:absolute;left:492px;top:391px;width:149px;height:41px;display:flex;align-items:center;box-sizing:border-box;padding-top:2px;font-size:14.7px;line-height:21px;color:#333;z-index:4;"><span><span style="letter-spacing:-0.24px">纳税人识别号</span></span><svg style="margin-left:5.4px;flex:none;position:relative;top:-0.8px" width="14" height="14" viewBox="0 0 14 14"><circle cx="7" cy="7" r="6.1" fill="none" stroke="#b9c6d2" stroke-width="1.25"/><path d="M4.9 5.4 C4.9 3.3 9.1 3.3 9.1 5.4 C9.1 6.9 7 6.9 7 8.5" fill="none" stroke="#b9c6d2" stroke-width="1.3"/><circle cx="7" cy="10.4" r="0.85" fill="#b9c6d2"/></svg></div>
<div style="position:absolute;left:661px;top:391px;width:258px;height:41px;display:flex;align-items:center;box-sizing:border-box;padding-top:2px;font-size:14.7px;line-height:21px;color:#333;z-index:4;"><span>91360125MAK2106L09</span></div>
<div style="position:absolute;left:939px;top:391px;width:148px;height:41px;display:flex;align-items:center;box-sizing:border-box;padding-top:2px;font-size:14.7px;line-height:21px;color:#333;z-index:4;"><span><span style="letter-spacing:-0.24px">组织机构代码</span></span><svg style="margin-left:5.4px;flex:none;position:relative;top:-0.8px" width="14" height="14" viewBox="0 0 14 14"><circle cx="7" cy="7" r="6.1" fill="none" stroke="#b9c6d2" stroke-width="1.25"/><path d="M4.9 5.4 C4.9 3.3 9.1 3.3 9.1 5.4 C9.1 6.9 7 6.9 7 8.5" fill="none" stroke="#b9c6d2" stroke-width="1.3"/><circle cx="7" cy="10.4" r="0.85" fill="#b9c6d2"/></svg></div>
<div style="position:absolute;left:1107px;top:391px;width:200px;height:41px;display:flex;align-items:center;box-sizing:border-box;padding-top:2px;font-size:14.7px;line-height:21px;color:#333;z-index:4;"><span>MAK2106L-0</span></div>
<div style="position:absolute;left:48px;top:432px;width:148px;height:41px;display:flex;align-items:center;box-sizing:border-box;padding-top:2px;font-size:14.7px;line-height:21px;color:#333;z-index:4;"><span><span style="letter-spacing:-0.24px">营业期限</span></span></div>
<div style="position:absolute;left:216px;top:432px;width:256px;height:41px;display:flex;align-items:center;box-sizing:border-box;padding-top:2px;font-size:14.7px;line-height:21px;color:#333;z-index:4;"><span>2025-11-17 <span style="letter-spacing:-0.24px">至</span> <span style="letter-spacing:-0.24px">无固定期限</span></span></div>
<div style="position:absolute;left:492px;top:432px;width:149px;height:41px;display:flex;align-items:center;box-sizing:border-box;padding-top:2px;font-size:14.7px;line-height:21px;color:#333;z-index:4;"><span><span style="letter-spacing:-0.24px">纳税人资质</span></span></div>
<div style="position:absolute;left:661px;top:432px;width:258px;height:41px;display:flex;align-items:center;box-sizing:border-box;padding-top:2px;font-size:14.7px;line-height:21px;color:#333;z-index:4;"><span>-</span></div>
<div style="position:absolute;left:939px;top:432px;width:148px;height:41px;display:flex;align-items:center;box-sizing:border-box;padding-top:2px;font-size:14.7px;line-height:21px;color:#333;z-index:4;"><span><span style="letter-spacing:-0.24px">核准日期</span></span></div>
<div style="position:absolute;left:1107px;top:432px;width:200px;height:41px;display:flex;align-items:center;box-sizing:border-box;padding-top:2px;font-size:14.7px;line-height:21px;color:#333;z-index:4;"><span>2025-11-17</span></div>
<div style="position:absolute;left:48px;top:473px;width:148px;height:64px;display:flex;align-items:center;box-sizing:border-box;padding-top:2px;font-size:14.7px;line-height:21px;color:#333;z-index:4;"><span><span style="letter-spacing:-0.24px">企业类型</span></span></div>
<div style="position:absolute;left:216px;top:473px;width:256px;height:64px;display:flex;align-items:center;box-sizing:border-box;padding-top:2px;font-size:14.7px;line-height:21px;color:#333;z-index:4;"><div style="line-height:23px"><span><span style="letter-spacing:-0.24px">有限责任公司（非自然人投资或控股的</span></span><br><span><span style="letter-spacing:-0.24px">法人独资）</span></span></div></div>
<div style="position:absolute;left:492px;top:473px;width:149px;height:64px;display:flex;align-items:center;box-sizing:border-box;padding-top:2px;font-size:14.7px;line-height:21px;color:#333;z-index:4;"><span><span style="letter-spacing:-0.24px">行业</span></span></div>
<div style="position:absolute;left:661px;top:473px;width:258px;height:64px;display:flex;align-items:center;box-sizing:border-box;padding-top:2px;font-size:14.7px;line-height:21px;color:#333;z-index:4;"><span><span style="letter-spacing:-0.24px">软件和信息技术服务业</span></span></div>
<div style="position:absolute;left:939px;top:473px;width:148px;height:64px;display:flex;align-items:center;box-sizing:border-box;padding-top:2px;font-size:14.7px;line-height:21px;color:#333;z-index:4;"><span><span style="letter-spacing:-0.24px">人员规模</span></span></div>
<div style="position:absolute;left:1107px;top:473px;width:200px;height:64px;display:flex;align-items:center;box-sizing:border-box;padding-top:2px;font-size:14.7px;line-height:21px;color:#333;z-index:4;"><span>-</span></div>
<div style="position:absolute;left:48px;top:537px;width:148px;height:41px;display:flex;align-items:center;box-sizing:border-box;padding-top:2px;font-size:14.7px;line-height:21px;color:#333;z-index:4;"><span><span style="letter-spacing:-0.24px">参保人数</span></span></div>
<div style="position:absolute;left:216px;top:537px;width:256px;height:41px;display:flex;align-items:center;box-sizing:border-box;padding-top:2px;font-size:14.7px;line-height:21px;color:#333;z-index:4;"><span>-</span></div>
<div style="position:absolute;left:492px;top:537px;width:149px;height:41px;display:flex;align-items:center;box-sizing:border-box;padding-top:2px;font-size:14.7px;line-height:21px;color:#333;z-index:4;"><span><span style="letter-spacing:-0.24px">英文名称</span></span></div>
<div style="position:absolute;left:661px;top:537px;width:646px;height:41px;display:flex;align-items:center;box-sizing:border-box;padding-top:2px;font-size:14.7px;line-height:21px;color:#333;z-index:4;"><span>-</span></div>
<div style="position:absolute;left:48px;top:578px;width:148px;height:41px;display:flex;align-items:center;box-sizing:border-box;padding-top:2px;font-size:14.7px;line-height:21px;color:#333;z-index:4;"><span><span style="letter-spacing:-0.24px">登记机关</span></span></div>
<div style="position:absolute;left:216px;top:578px;width:256px;height:41px;display:flex;align-items:center;box-sizing:border-box;padding-top:2px;font-size:14.7px;line-height:21px;color:#333;z-index:4;"><span><span style="letter-spacing:-0.24px">南昌市红谷滩区市场监督管理局</span></span></div>
<div style="position:absolute;left:492px;top:578px;width:149px;height:41px;display:flex;align-items:center;box-sizing:border-box;padding-top:2px;font-size:14.7px;line-height:21px;color:#333;z-index:4;"><span><span style="letter-spacing:-0.24px">注册地址</span></span><svg style="margin-left:5.4px;flex:none;position:relative;top:-0.8px" width="14" height="14" viewBox="0 0 14 14"><circle cx="7" cy="7" r="6.1" fill="none" stroke="#b9c6d2" stroke-width="1.25"/><path d="M4.9 5.4 C4.9 3.3 9.1 3.3 9.1 5.4 C9.1 6.9 7 6.9 7 8.5" fill="none" stroke="#b9c6d2" stroke-width="1.3"/><circle cx="7" cy="10.4" r="0.85" fill="#b9c6d2"/></svg></div>
<div style="position:absolute;left:661px;top:578px;width:646px;height:41px;display:flex;align-items:center;box-sizing:border-box;padding-top:2px;font-size:14.7px;line-height:21px;color:#333;z-index:4;"><span><span style="letter-spacing:-0.24px">江西省南昌市红谷滩区凤凰中大道</span>1000<span style="letter-spacing:-0.24px">号南昌万达中心</span>B2<span style="letter-spacing:-0.24px">写字楼</span>1708<span style="letter-spacing:-0.24px">室（第</span>17<span style="letter-spacing:-0.24px">层）</span></span></div>
<div style="position:absolute;left:48px;top:619px;width:148px;height:134px;display:flex;align-items:center;box-sizing:border-box;padding-top:2px;font-size:14.7px;line-height:21px;color:#333;z-index:4;"><span><span style="letter-spacing:-0.24px">经营范围</span></span><svg style="margin-left:5.4px;flex:none;position:relative;top:-0.8px" width="14" height="14" viewBox="0 0 14 14"><circle cx="7" cy="7" r="6.1" fill="none" stroke="#b9c6d2" stroke-width="1.25"/><path d="M4.9 5.4 C4.9 3.3 9.1 3.3 9.1 5.4 C9.1 6.9 7 6.9 7 8.5" fill="none" stroke="#b9c6d2" stroke-width="1.3"/><circle cx="7" cy="10.4" r="0.85" fill="#b9c6d2"/></svg></div>
<div style="position:absolute;left:216px;top:619px;width:1091px;height:134px;display:flex;align-items:center;box-sizing:border-box;padding-top:2px;font-size:14.7px;line-height:21px;color:#333;z-index:4;"><div style="line-height:23.2px;white-space:nowrap"><span><span style="letter-spacing:-0.24px">一般项目：软件开发，人工智能基础资源与技术平台，人工智能公共服务平台技术咨询服务，人工智能应用软件开发，人工智能行业应用系统集成服务，人工智能硬件销</span></span><br><span><span style="letter-spacing:-0.24px">售，技术服务、技术开发、技术咨询、技术交流、技术转让、技术推广，云计算装备技术服务，数据处理和存储支持服务，信息系统集成服务，数据处理服务，物联网应</span></span><br><span><span style="letter-spacing:-0.24px">用服务，物联网技术研发，物联网技术服务，基于云平台的业务外包服务，新材料技术推广服务，园区管理服务，数字技术服务，物业管理，创业空间服务，信息咨询服</span></span><br><span><span style="letter-spacing:-0.24px">务（不含许可类信息咨询服务），信息技术咨询服务，人工智能基础软件开发，人工智能理论与算法软件开发，企业管理咨询，网络与信息安全软件开发，信息系统运行</span></span><br><span><span style="letter-spacing:-0.24px">维护服务（除依法须经批准的项目外，凭营业执照依法自主开展经营活动）</span></span></div></div>

</body></html>
